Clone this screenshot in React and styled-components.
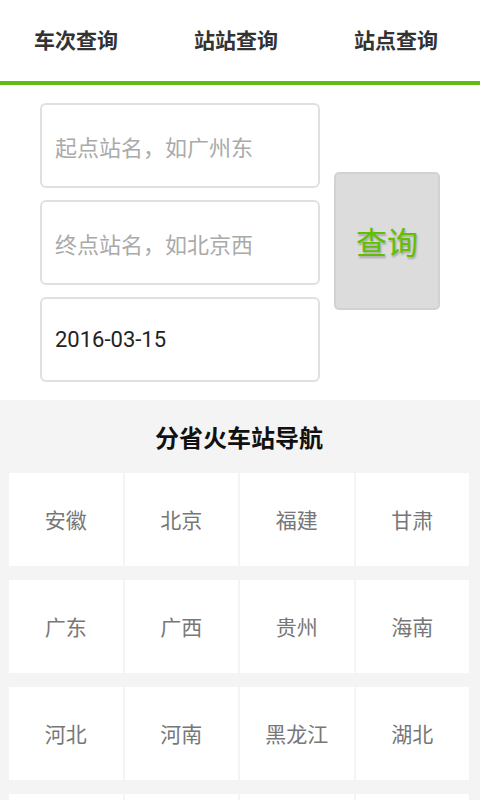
import styled, { createGlobalStyle } from "styled-components";

const GlobalStyle = createGlobalStyle`
  html, body {
    margin: 0;
    padding: 0;
    background: #ffffff;
    font-family: Roboto, "Noto Sans CJK SC", "Noto Sans", sans-serif;
  }
  * {
    box-sizing: border-box;
  }
`;

const Page = styled.div`
  width: 480px;
  height: 800px;
  overflow: hidden;
  display: flex;
  flex-direction: column;
  background: #ffffff;
  & > * {
    flex-shrink: 0;
  }
`;

const TabBar = styled.nav`
  height: 85px;
  display: flex;
  border-bottom: 4px solid #5fbd10;
`;

const Tab = styled.div`
  flex: 1;
  display: flex;
  align-items: center;
  justify-content: center;
  padding-right: 8px;
  padding-bottom: 4px;
  font-size: 21px;
  font-weight: 700;
  color: #333333;
  font-family: "Noto Sans CJK SC", sans-serif;
`;

const SearchForm = styled.form`
  display: flex;
  align-items: center;
  gap: 14px;
  padding: 18px 0 18px 40px;
`;

const Fields = styled.div`
  width: 280px;
  display: flex;
  flex-direction: column;
  gap: 12px;
`;

const Field = styled.div`
  height: 85px;
  display: flex;
  align-items: center;
  padding-left: 13px;
  border: 2px solid #e0e0e0;
  border-radius: 6px;
  font-size: 22px;
  color: ${(p) => (p.$placeholder ? "#aaaaaa" : "#222222")};
  font-family: ${(p) =>
    p.$placeholder ? '"Noto Sans CJK SC", sans-serif' : "Roboto, sans-serif"};
`;

const QueryButton = styled.button`
  width: 106px;
  height: 138px;
  margin-top: -4px;
  padding: 0;
  background: #dcdcdc;
  border: 2px solid #d2d2d2;
  border-radius: 5px;
  font-family: "Noto Sans CJK SC", sans-serif;
  font-size: 31px;
  color: #5fbf00;
  text-shadow: 1px 2px 2px rgba(0, 0, 0, 0.25);
`;

const Nav = styled.section`
  flex: 1;
  background: #f4f4f4;
  padding: 0 11px 0 9px;
`;

const NavTitle = styled.h2`
  margin: 0;
  height: 73px;
  display: flex;
  align-items: center;
  justify-content: center;
  font-size: 24px;
  font-weight: 700;
  color: #111111;
  font-family: "Noto Sans CJK SC", sans-serif;
`;

const ProvinceGrid = styled.div`
  display: grid;
  grid-template-columns: repeat(4, 1fr);
  grid-auto-rows: 93px;
  column-gap: 2px;
  row-gap: 14px;
`;

const Province = styled.div`
  background: #ffffff;
  display: flex;
  align-items: center;
  justify-content: center;
  padding-bottom: 2px;
  font-size: 21px;
  color: #777777;
  font-family: "Noto Sans CJK SC", sans-serif;
`;

const tabs = ["车次查询", "站站查询", "站点查询"];

const provinces = [
  "安徽", "北京", "福建", "甘肃",
  "广东", "广西", "贵州", "海南",
  "河北", "河南", "黑龙江", "湖北",
  "湖南", "吉林", "江苏", "江西",
];

export default function App() {
  return (
    <>
      <GlobalStyle />
      <Page>
        <TabBar>
          {tabs.map((t) => (
            <Tab key={t}>{t}</Tab>
          ))}
        </TabBar>
        <SearchForm onSubmit={(e) => e.preventDefault()}>
          <Fields>
            <Field $placeholder>起点站名，如广州东</Field>
            <Field $placeholder>终点站名，如北京西</Field>
            <Field>2016-03-15</Field>
          </Fields>
          <QueryButton type="submit">查询</QueryButton>
        </SearchForm>
        <Nav>
          <NavTitle>分省火车站导航</NavTitle>
          <ProvinceGrid>
            {provinces.map((p) => (
              <Province key={p}>{p}</Province>
            ))}
          </ProvinceGrid>
        </Nav>
      </Page>
    </>
  );
}
